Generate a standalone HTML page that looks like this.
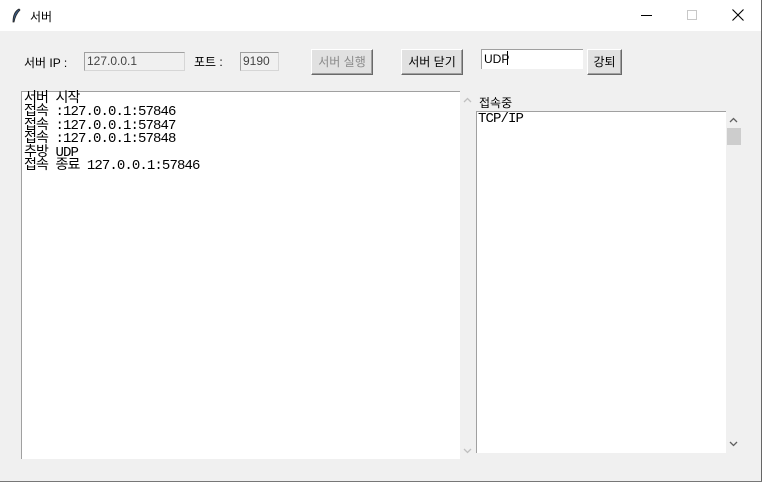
<!DOCTYPE html>
<html><head><meta charset="utf-8"><style>
*{margin:0;padding:0;box-sizing:border-box}
body{width:762px;height:482px;background:#f0f0f0;position:relative;overflow:hidden;font-family:"Liberation Sans","Noto Sans CJK KR",sans-serif;font-size:12px;color:#000}
.a{position:absolute}
.title{left:0;top:0;width:762px;height:31px;background:#fff}
.ent{background:#f0f0f0;border:1px solid #d6d6d6;border-top-color:#a0a0a0;border-left-color:#a0a0a0;padding:0 2px;line-height:17px;color:#444;font-size:12px}
.btn{background:#e1e1e1;border:1px solid #fff;border-right-color:#696969;border-bottom-color:#696969;box-shadow:inset -1px -1px 0 #a0a0a0;text-align:center;line-height:24px;font-size:12px}
.mono{font-family:"Liberation Mono","Noto Sans CJK KR",monospace;font-size:14px;line-height:13.4px;letter-spacing:-0.9px}
</style></head><body>
<div class="a title"></div>
<svg class="a" style="left:11px;top:8px" width="10" height="16" viewBox="0 0 10 16"><path d="M8 1 C4 3 2 8 2 14 L3 14 C4 9 6 5 9 2 Z" fill="#3a5a80" stroke="#222" stroke-width="0.8"/></svg>
<div class="a" style="left:30px;top:8px;font-size:12px">서버</div>
<div class="a" style="left:641px;top:15px;width:11px;height:1px;background:#000"></div>
<div class="a" style="left:687px;top:10px;width:10px;height:10px;border:1px solid #c8c8c8"></div>
<svg class="a" style="left:732px;top:9px" width="12" height="12"><path d="M0.5 0.5L11.5 11.5M11.5 0.5L0.5 11.5" stroke="#000" stroke-width="1.1"/></svg>
<div class="a" style="right:0;top:0;width:1px;height:482px;background:#666"></div>
<div class="a" style="left:0;bottom:0;width:762px;height:1px;background:#777"></div>

<div class="a" style="left:24px;top:54px">서버 IP :</div>
<div class="a ent" style="left:84px;top:52px;width:101px;height:19px">127.0.0.1</div>
<div class="a" style="left:194px;top:53px">포트 :</div>
<div class="a ent" style="left:240px;top:52px;width:39px;height:19px">9190</div>
<div class="a btn" style="left:311px;top:49px;width:62px;height:26px;color:#8a8a8a">서버 실행</div>
<div class="a btn" style="left:401px;top:49px;width:62px;height:26px">서버 닫기</div>
<div class="a" style="left:481px;top:49px;width:102px;height:20px;background:#fff;border-top:1px solid #a0a0a0;border-left:1px solid #a0a0a0;padding-left:2px;line-height:18px">UDP<span style="display:inline-block;width:1px;height:14px;background:#000;vertical-align:-2px;margin-left:-2px"></span></div>
<div class="a btn" style="left:587px;top:49px;width:35px;height:26px">강퇴</div>

<div class="a mono" style="left:21px;top:91px;width:439px;height:368px;background:#fff;border-top:1px solid #a0a0a0;border-left:1px solid #a0a0a0;padding:1px 0 0 2px">서버 시작<br>접속 :127.0.0.1:57846<br>접속 :127.0.0.1:57847<br>접속 :127.0.0.1:57848<br>추방 UDP<br>접속 종료 127.0.0.1:57846</div>
<svg class="a" style="left:463px;top:97px" width="9" height="6"><path d="M1 5L4.5 1.5L8 5" stroke="#c0c0c0" fill="none" stroke-width="1.3"/></svg>
<svg class="a" style="left:463px;top:448px" width="9" height="6"><path d="M1 1L4.5 4.5L8 1" stroke="#c0c0c0" fill="none" stroke-width="1.3"/></svg>

<div class="a" style="left:479px;top:94px">접속중</div>
<div class="a mono" style="left:476px;top:111px;width:250px;height:342px;background:#fff;border-top:1px solid #a0a0a0;border-left:1px solid #a0a0a0;padding:1px 0 0 1px">TCP/IP</div>
<svg class="a" style="left:729px;top:117px" width="9" height="6"><path d="M1 5L4.5 1.5L8 5" stroke="#606060" fill="none" stroke-width="1.3"/></svg>
<div class="a" style="left:727px;top:128px;width:14px;height:17px;background:#cdcdcd"></div>
<svg class="a" style="left:729px;top:441px" width="9" height="6"><path d="M1 1L4.5 4.5L8 1" stroke="#606060" fill="none" stroke-width="1.3"/></svg>
</body></html>
